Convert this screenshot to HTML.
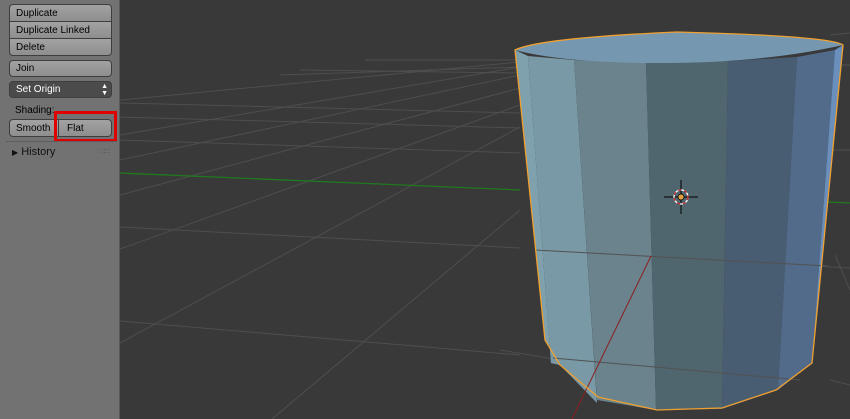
<!DOCTYPE html><html><head><style>
body{margin:0;width:850px;height:419px;overflow:hidden;background:#393939;position:relative;font-family:"Liberation Sans",sans-serif}
#p{position:absolute;left:0;top:0;width:119px;height:419px;background:#727272;border-right:1px solid #5a5a5a}
.b{position:absolute;box-sizing:border-box;border:1px solid #3e3e3e;background:linear-gradient(#a2a2a2,#8e8e8e);font-size:10px;color:#000;padding-left:6px;line-height:17px}
.t{position:absolute;font-size:10px;color:#000}
</style></head><body>
<svg style="position:absolute;left:0;top:0" width="850" height="419">
<g stroke="#4e4e4e" stroke-width="1" fill="none">
<line x1="365" y1="60" x2="520" y2="60"/>
<line x1="280" y1="75" x2="520" y2="67"/>
<line x1="300" y1="70" x2="520" y2="73"/>
<line x1="120" y1="103" x2="520" y2="113"/>
<line x1="120" y1="117" x2="520" y2="128"/>
<line x1="120" y1="140" x2="520" y2="153"/>
<line x1="120" y1="227" x2="520" y2="248"/>
<line x1="120" y1="321" x2="520" y2="355"/>
<line x1="120" y1="100" x2="520" y2="62"/>
<line x1="120" y1="135" x2="520" y2="67"/>
<line x1="120" y1="160" x2="520" y2="75"/>
<line x1="120" y1="195" x2="520" y2="88"/>
<line x1="120" y1="249" x2="520" y2="105"/>
<line x1="120" y1="343" x2="520" y2="127"/>
<line x1="272" y1="419" x2="520" y2="210"/>
<line x1="540" y1="250" x2="850" y2="268"/>
<line x1="835" y1="255" x2="850" y2="290"/>
<line x1="830" y1="35" x2="850" y2="33"/>
<line x1="830" y1="65" x2="850" y2="65"/>
<line x1="830" y1="150" x2="850" y2="150"/>
<line x1="830" y1="380" x2="850" y2="385"/>
<line x1="500" y1="350" x2="560" y2="360"/>
</g>
<line x1="120" y1="173" x2="520" y2="190" stroke="#1f7a1f" stroke-width="1.3"/>
<line x1="828" y1="202" x2="850" y2="203" stroke="#1f7a1f" stroke-width="1.3"/>
<polygon points="515,50 528,56 551,363 560,365 545,340" fill="#7fa0ad"/>
<polygon points="528,56 574,60 597,403 560,365 551,363" fill="#7899a5"/>
<polygon points="574,60 646,63 656,410 597,400" fill="#6a838c"/>
<polygon points="646,63 728,61 722,409 656,410" fill="#50666f"/>
<polygon points="728,61 797,57 778,390 722,409" fill="#485c72"/>
<polygon points="797,57 835,50 812,363 778,390" fill="#526b8b"/>
<polygon points="835,50 843,45 812,363" fill="#6a8fbd"/>
<path d="M515,50 Q540,38 677,32 Q830,36 843,45 Q760,64 646,63 Q560,62 515,50Z" fill="#7598b0"/>
<g stroke="#525252" stroke-width="1"><line x1="535" y1="250" x2="828" y2="266"/><line x1="553" y1="358" x2="800" y2="380"/></g>
<line x1="651" y1="256" x2="572" y2="419" stroke="#8a2020" stroke-width="1"/>
<path d="M515,50 Q540,38 677,32 Q830,36 843,45 L812,363 L776,390 L722,408 L657,410 L598,397 L560,365 L545,340 Z" fill="none" stroke="#f0a030" stroke-width="1.3"/>
<g transform="translate(681,197)">
<line x1="-17" y1="0" x2="17" y2="0" stroke="#000"/><line x1="0" y1="-17" x2="0" y2="17" stroke="#000"/>
<circle r="7" fill="none" stroke="#fff" stroke-width="1.3"/><circle r="7" fill="none" stroke="#c02020" stroke-width="1.3" stroke-dasharray="3 3"/>
<circle r="3" fill="#e0a040" stroke="#000" stroke-width="0.7"/></g>
</svg>
<div id="p">
<div class="b" style="left:9px;top:4px;width:103px;height:18px;border-radius:4px 4px 0 0">Duplicate</div>
<div class="b" style="left:9px;top:21px;width:103px;height:18px">Duplicate Linked</div>
<div class="b" style="left:9px;top:38px;width:103px;height:18px;border-radius:0 0 4px 4px">Delete</div>
<div class="b" style="left:9px;top:60px;width:103px;height:17px;border-radius:4px;line-height:16px">Join</div>
<div class="b" style="left:9px;top:81px;width:103px;height:17px;border-radius:4px;background:#4b4b4b;color:#fff;line-height:16px">Set Origin<span style="position:absolute;right:3px;top:1px;font-size:7px;line-height:7px">▲<br>▼</span></div>
<div class="t" style="left:15px;top:105px">Shading:</div>
<div class="b" style="left:9px;top:119px;width:50px;height:18px;border-radius:4px 0 0 4px">Smooth</div>
<div class="b" style="left:58px;top:119px;width:54px;height:18px;border-radius:0 4px 4px 0;padding-left:8px">Flat</div>
<div style="position:absolute;left:54px;top:111px;width:57px;height:25px;border:3px solid #e00000"></div>
<div style="position:absolute;left:6px;top:141px;width:111px;height:1px;background:#5e5e5e"></div>
<div class="t" style="left:12px;top:146px;font-size:11px;color:#111"><span style="font-size:8px">▶</span> History</div>
<div class="t" style="left:100px;top:147px;color:#555;font-size:8px">∷∷</div>
</div>
</body></html>
